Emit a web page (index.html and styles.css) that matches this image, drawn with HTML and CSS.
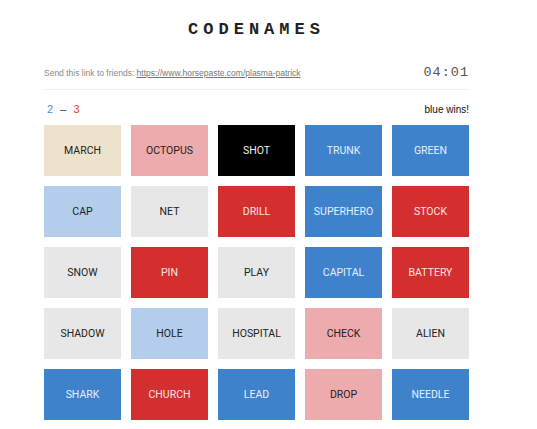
FILE: index.html
```html
<!DOCTYPE html>
<html lang="en">
<head>
  <meta charset="UTF-8" />
  <meta name="viewport" content="width=device-width, initial-scale=1.0"/>
  <title>Codenames</title>
  <link rel="stylesheet" href="styles.css">
</head>
<body>
  <div class="page">
    <h1 class="title">CODENAMES</h1>

    <div class="info">
      <p class="share">Send this link to friends: <a href="#">https://www.horsepaste.com/plasma-patrick</a></p>
      <span class="timer">04:01</span>
    </div>

    <div class="status">
      <div class="score">
        <span class="blue-score">2</span>
        <span class="dash">&ndash;</span>
        <span class="red-score">3</span>
      </div>
      <span class="winner">blue wins!</span>
    </div>

    <div class="board">
      <div class="card neutral">MARCH</div>
      <div class="card red-light">OCTOPUS</div>
      <div class="card assassin">SHOT</div>
      <div class="card blue">TRUNK</div>
      <div class="card blue">GREEN</div>

      <div class="card blue-light">CAP</div>
      <div class="card grey">NET</div>
      <div class="card red">DRILL</div>
      <div class="card blue">SUPERHERO</div>
      <div class="card red">STOCK</div>

      <div class="card grey">SNOW</div>
      <div class="card red">PIN</div>
      <div class="card grey">PLAY</div>
      <div class="card blue">CAPITAL</div>
      <div class="card red">BATTERY</div>

      <div class="card grey">SHADOW</div>
      <div class="card blue-light">HOLE</div>
      <div class="card grey">HOSPITAL</div>
      <div class="card red-light">CHECK</div>
      <div class="card grey">ALIEN</div>

      <div class="card blue">SHARK</div>
      <div class="card red">CHURCH</div>
      <div class="card blue">LEAD</div>
      <div class="card red-light">DROP</div>
      <div class="card blue">NEEDLE</div>
    </div>
  </div>
</body>
</html>
```

FILE: styles.css
```css
body {
  margin: 0;
  font-family: 'Roboto', 'Liberation Sans', sans-serif;
  background: #fff;
  color: #222;
}
.page {
  width: 425px;
  margin-left: 44px;
}
.title {
  margin: 0;
  padding-top: 21px;
  text-align: center;
  font-family: 'Liberation Mono', monospace;
  font-weight: bold;
  font-size: 17px;
  letter-spacing: 5px;
  line-height: 18px;
}
.info {
  margin-top: 26px;
  display: flex;
  justify-content: space-between;
  align-items: center;
  padding-bottom: 9px;
  border-bottom: 1px solid #f0f0f0;
}
.share {
  margin: 0;
  font-family: 'Liberation Sans', sans-serif;
  font-size: 8.5px;
  color: #8a8a8a;
}
.share a {
  color: #777;
}
.timer {
  font-family: 'Liberation Mono', monospace;
  font-size: 13.5px;
  letter-spacing: 1px;
  color: #555;
}
.status {
  display: flex;
  justify-content: space-between;
  align-items: center;
  padding: 13px 0 10px;
}
.score {
  font-family: 'Liberation Sans', sans-serif;
  font-size: 11px;
  padding-left: 3px;
}
.blue-score { color: #4a8fe0; }
.red-score { color: #e53935; }
.dash {
  color: #333;
  margin: 0 4px;
}
.winner {
  font-family: 'Liberation Sans', sans-serif;
  font-size: 10px;
  color: #111;
}
.board {
  display: grid;
  grid-template-columns: repeat(5, 1fr);
  grid-auto-rows: 51px;
  gap: 10px;
}
.card {
  display: flex;
  align-items: center;
  justify-content: center;
  font-size: 10.5px;
  color: #222;
}
.neutral { background: #ede3cd; }
.grey { background: #e7e7e7; }
.red-light { background: #eeabad; }
.blue-light { background: #b3cdea; }
.assassin { background: #000; color: #eee; }
.blue { background: #3e82cc; color: #e6eefa; }
.red { background: #d42f2f; color: #fbe3e3; }
```
